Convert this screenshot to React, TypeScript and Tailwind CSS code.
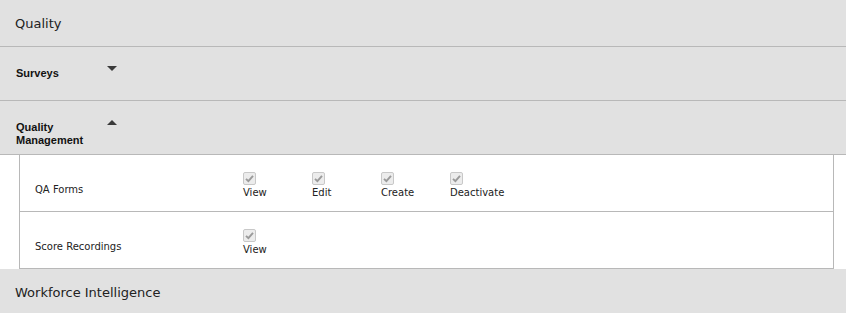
import React from "react";

const Check = () => (
  <span className="inline-flex h-[13px] w-[13px] items-center justify-center rounded-[2px] border border-[#c8c8c8] bg-[#ececec]">
    <svg width="9" height="9" viewBox="0 0 9 9">
      <path d="M1 4.8 L3.4 7.2 L8 1.8" fill="none" stroke="#9a9a9a" strokeWidth="1.9" />
    </svg>
  </span>
);

const Perm = ({ label }: { label: string }) => (
  <div className="flex w-[69px] flex-col items-start">
    <Check />
    <span className="mt-[1px] leading-[13px]">{label}</span>
  </div>
);

const Row = ({ name, perms }: { name: string; perms: string[] }) => (
  <div className="flex h-[57px] items-start border-b border-[#b8b8b8]">
    <div className="w-[223px] pl-[15px] pt-[28px] leading-[13px]">{name}</div>
    <div className="flex pt-[17px]">
      {perms.map((p) => (
        <Perm key={p} label={p} />
      ))}
    </div>
  </div>
);

const Caret = ({ up }: { up?: boolean }) => (
  <span
    className={`mt-[-1px] h-0 w-0 border-x-[5px] border-x-transparent ${
      up ? "border-b-[5px] border-b-[#3a3a3a]" : "border-t-[5px] border-t-[#3a3a3a]"
    }`}
  />
);

export default function App() {
  return (
    <div className="w-[846px] bg-white text-[#222]" style={{ fontFamily: '"DejaVu Sans", Verdana, sans-serif' }}>
      <div className="flex h-[47px] items-center border-b border-[#b8b8b8] bg-[#e1e1e1] px-[15px] pt-[2px] text-[13px]">
        Quality
      </div>
      <div className="flex h-[54px] items-start border-b border-[#b8b8b8] bg-[#e1e1e1] pl-[16px] pt-[20px]">
        <div className="w-[91px] text-[11px] font-bold leading-[13px] text-[#111]" style={{ fontFamily: '"Liberation Sans", Arial, sans-serif' }}>
          Surveys
        </div>
        <Caret />
      </div>
      <div className="flex h-[54px] items-start border-b border-[#b8b8b8] bg-[#e1e1e1] pl-[16px] pt-[20px]">
        <div className="w-[91px] text-[11px] font-bold leading-[13px] text-[#111]" style={{ fontFamily: '"Liberation Sans", Arial, sans-serif' }}>
          Quality
          <br />
          Management
        </div>
        <Caret up />
      </div>
      <div className="pl-[19px] pr-[12px] text-[10px]">
        <div className="border-x border-[#b8b8b8]">
          <Row name="QA Forms" perms={["View", "Edit", "Create", "Deactivate"]} />
          <Row name="Score Recordings" perms={["View"]} />
        </div>
      </div>
      <div className="flex h-[46px] items-center bg-[#e1e1e1] px-[15px] pt-[2px] text-[13px]">
        Workforce Intelligence
      </div>
    </div>
  );
}
